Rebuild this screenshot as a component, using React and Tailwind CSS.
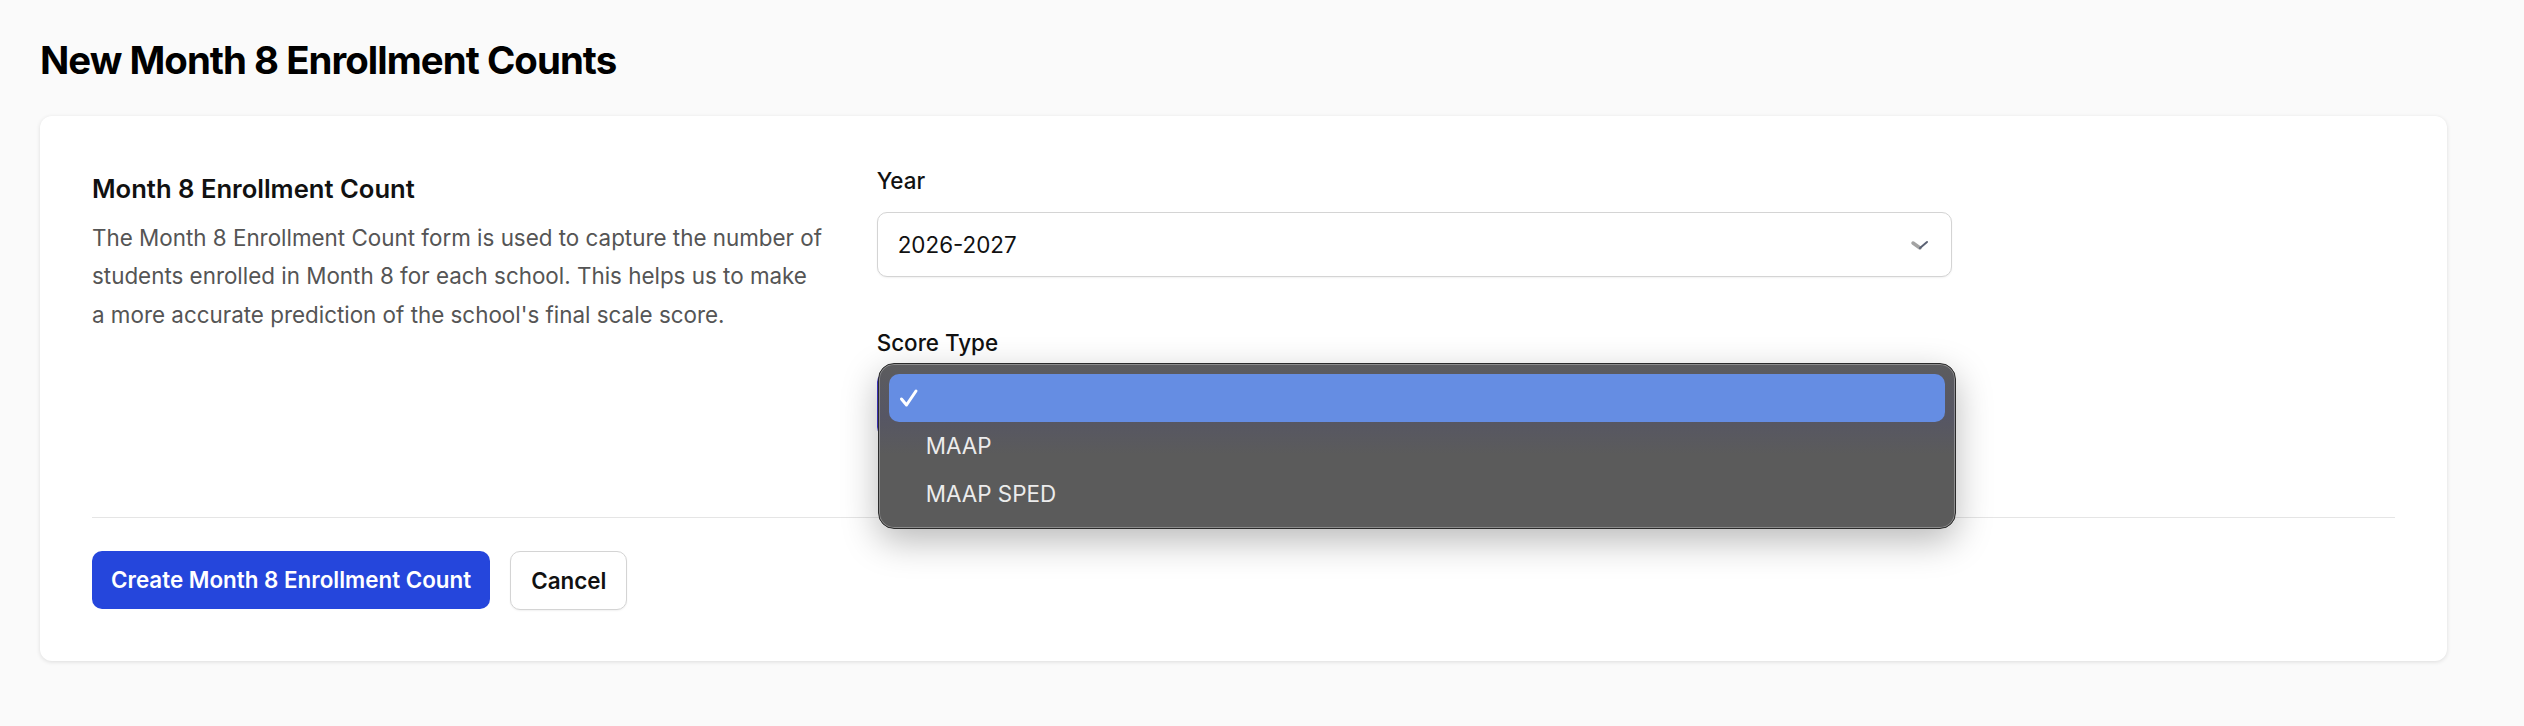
import React from 'react';

const options = [
  { label: '', selected: true },
  { label: 'MAAP', selected: false },
  { label: 'MAAP SPED', selected: false },
];

function Chevron() {
  return (
    <svg width="20" height="12" viewBox="0 0 20 12" className="shrink-0">
      <path d="M3 4 L10 9" stroke="#a3a3a3" strokeWidth="3.5" strokeLinecap="round" fill="none" />
      <path d="M10 9 L17 3" stroke="#5b6274" strokeWidth="2" strokeLinecap="round" fill="none" />
    </svg>
  );
}

function Check() {
  return (
    <svg width="20" height="20" viewBox="0 0 20 20">
      <path d="M2.5 11 L7.5 17 L17 3" stroke="#fff" strokeWidth="3" strokeLinecap="round" strokeLinejoin="round" fill="none" />
    </svg>
  );
}

// native-looking menu that sits over the focused Score Type select
function OptionMenu() {
  return (
    <div className="absolute left-[1px] top-[-9px] z-10 w-[1078px] rounded-[16px] border border-[#2b2b2b] bg-[linear-gradient(180deg,#5c5c5e_0%,#565664_32%,#5b5b5b_55%,#5b5b5b_100%)] p-[10px] shadow-[0_12px_36px_rgba(0,0,0,0.28),inset_0_0_0_1px_rgba(255,255,255,0.3)]">
      {options.map((o) => (
        <div
          key={o.label || 'blank'}
          className={`flex h-[48px] items-center rounded-[10px] pl-[10px] ${o.selected ? 'bg-[#658de3]' : ''}`}
        >
          <span className="flex w-[27px] items-center">{o.selected && <Check />}</span>
          <span className="text-[22.4px] text-[#ececec]">{o.label}</span>
        </div>
      ))}
    </div>
  );
}

export default function App() {
  return (
    <div className="min-h-screen bg-[#fafafa] px-[40px] pt-[40px] font-['Inter',sans-serif]">
      <h1 className="text-[38.4px] font-bold leading-[40px] tracking-tight text-black">New Month 8 Enrollment Counts</h1>

      <div className="mt-[36px] w-[2407px] rounded-[12px] bg-white px-[52px] pb-[51px] pt-[49px] shadow-[0_1px_4px_rgba(0,0,0,0.12)]">
        <div className="grid grid-cols-3 gap-x-[51.2px]">
          <div className="pt-[8px]">
            <h2 className="text-[25.6px] font-semibold leading-[32px] text-[#111]">Month 8 Enrollment Count</h2>
            <p className="mt-[14px] text-[22.4px] leading-[38.4px] text-[#555]">
              The Month 8 Enrollment Count form is used to capture the number of students enrolled in Month 8 for each
              school. This helps us to make a more accurate prediction of the school's final scale score.
            </p>
          </div>

          <div className="col-span-2 max-w-[1075px]">
            <label className="block text-[22.4px] font-medium leading-[32px] text-[#111]">Year</label>
            <div className="mt-[15px] flex h-[65px] items-center justify-between rounded-[10px] border border-[#d4d4d4] bg-white pl-[20px] pr-[21px] shadow-[0_1px_2px_rgba(0,0,0,0.06)]">
              <span className="text-[22.4px] text-[#111]">2026-2027</span>
              <Chevron />
            </div>

            <label className="mt-[50px] block text-[22.4px] font-medium leading-[32px] text-[#111]">Score Type</label>
            <div className="relative mt-[13px]">
              <div className="h-[65px] rounded-[10px] border-2 border-[#4338ca] bg-white" />
              <OptionMenu />
            </div>
          </div>
        </div>

        <div className="mt-[80px] flex gap-[20px] border-t border-[#e5e5e5] pt-[33px]">
          <button className="h-[58px] rounded-[10px] bg-[#2546dc] px-[19px] text-[22.4px] font-semibold text-white">
            Create Month 8 Enrollment Count
          </button>
          <button className="h-[59px] rounded-[10px] border border-[#d4d4d4] bg-white px-[20px] text-[22.4px] font-semibold text-[#111] shadow-[0_1px_2px_rgba(0,0,0,0.06)]">
            Cancel
          </button>
        </div>
      </div>
    </div>
  );
}
